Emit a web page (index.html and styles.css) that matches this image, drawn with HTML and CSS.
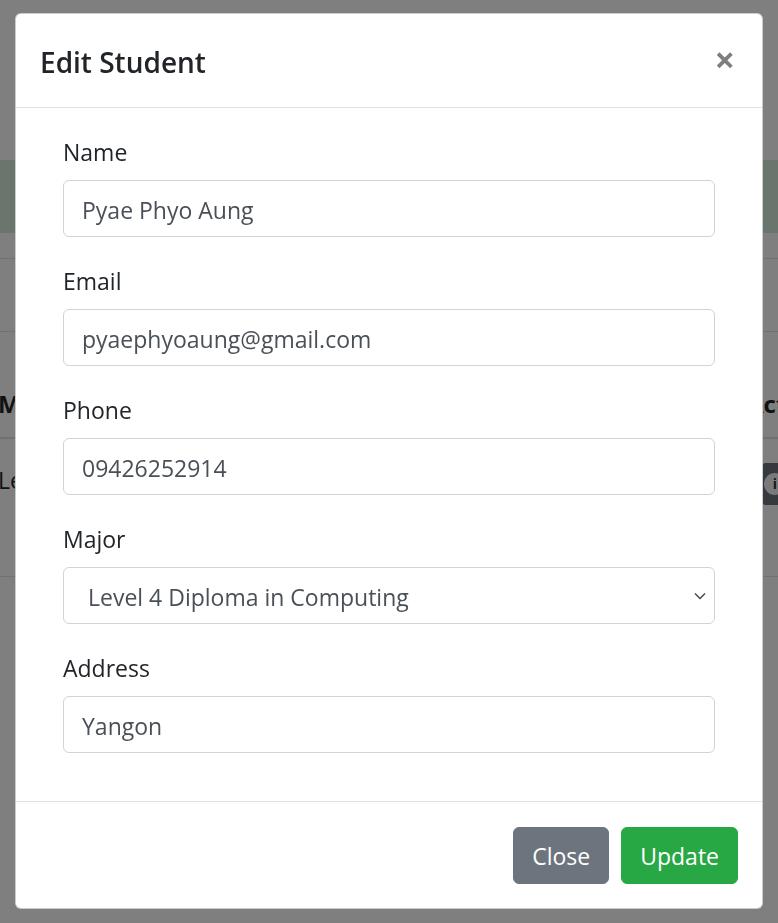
FILE: index.html
```html
<!DOCTYPE html>
<html lang="en">
<head>
<meta charset="utf-8">
<title>Edit Student</title>
<link rel="stylesheet" href="styles.css">
</head>
<body>
<div class="page">
  <div class="alert">Student updated successfully</div>
  <div class="toolbar">Students</div>
  <div class="table">
    <div class="row head">
      <div class="cell first">Major</div>
      <div class="spacer"></div>
      <div class="cell last">Action</div>
    </div>
    <div class="row body-row">
      <div class="cell first">Level 4</div>
      <div class="spacer"></div>
      <div class="cell last">
        <span class="info-btn"><span class="info-circle">i</span></span>
      </div>
    </div>
  </div>
</div>

<div class="backdrop"></div>

<div class="modal">
  <div class="modal-header">
    <h5 class="modal-title">Edit Student</h5>
    <button class="close" type="button">&times;</button>
  </div>
  <div class="modal-body">
    <form class="form">
      <div class="form-group">
        <label class="label">Name</label>
        <input class="input" type="text" value="Pyae Phyo Aung">
      </div>
      <div class="form-group">
        <label class="label">Email</label>
        <input class="input" type="text" value="pyaephyoaung@gmail.com">
      </div>
      <div class="form-group">
        <label class="label">Phone</label>
        <input class="input" type="text" value="09426252914">
      </div>
      <div class="form-group">
        <label class="label">Major</label>
        <div class="select-wrap">
          <select class="input select">
            <option>Level 4 Diploma in Computing</option>
          </select>
          <svg class="chevron" width="12" height="8" viewBox="0 0 12 8"><path d="M1 1.5 L6 6.5 L11 1.5" fill="none" stroke="#444" stroke-width="1.4"/></svg>
        </div>
      </div>
      <div class="form-group">
        <label class="label">Address</label>
        <input class="input" type="text" value="Yangon">
      </div>
    </form>
  </div>
  <div class="modal-footer">
    <button class="btn btn-secondary" type="button">Close</button>
    <button class="btn btn-success" type="button">Update</button>
  </div>
</div>
</body>
</html>
```

FILE: styles.css
```css
* { box-sizing: border-box; }

html, body {
  margin: 0;
  height: 100%;
}

body {
  font-family: "Open Sans", "Noto Sans", "DejaVu Sans", sans-serif;
  font-size: 23px;
  line-height: 36px;
  color: #212529;
  background: #fff;
  overflow: hidden;
}

/* background page */
.page {
  padding-top: 160px;
}

.alert {
  height: 73px;
  background: #d4edda;
  color: #155724;
  padding: 18px 30px;
  font-size: 0;
}

.toolbar {
  margin-top: 25px;
  height: 74px;
  border-top: 1px solid #dee2e6;
  border-bottom: 1px solid #dee2e6;
  font-size: 0;
}

.table {
  margin-top: 48px;
}

.row {
  display: flex;
  overflow: hidden;
}

.row.head {
  height: 59px;
  padding-top: 6px;
  border-bottom: 2px solid #dee2e6;
  font-weight: 700;
  font-size: 24px;
}

.row.body-row {
  height: 138px;
  padding-top: 23px;
  border-bottom: 1px solid #dee2e6;
}

.cell.first {
  margin-left: -2px;
  white-space: nowrap;
}

.spacer { flex: 1; }

.cell.last {
  width: 31px;
  flex: none;
  white-space: nowrap;
  overflow: hidden;
}

.info-btn {
  display: inline-flex;
  align-items: center;
  margin-left: 15px;
  height: 42px;
  width: 60px;
  background: #6c757d;
  border-radius: 4px;
  padding-left: 2px;
}

.info-circle {
  width: 22px;
  height: 22px;
  border-radius: 50%;
  background: #f5f5f5;
  color: #333;
  font-size: 14px;
  line-height: 22px;
  text-align: center;
  font-weight: 700;
}

.backdrop {
  position: fixed;
  inset: 0;
  background: rgba(0, 0, 0, 0.5);
}

/* modal */
.modal {
  position: fixed;
  top: 13px;
  left: 15px;
  width: 748px;
  background: #fff;
  border: 1px solid rgba(0, 0, 0, 0.2);
  border-radius: 6px;
  display: flex;
  flex-direction: column;
}

.modal-header {
  display: flex;
  align-items: flex-start;
  justify-content: space-between;
  padding: 24px;
  border-bottom: 1px solid #dee2e6;
}

.modal-title {
  margin: 0;
  font-size: 28px;
  line-height: 45px;
  height: 45px;
  font-weight: 600;
  color: #212529;
  padding-top: 2px;
}

.close {
  padding: 28px 27px 20px 21px;
  margin: -24px -24px -24px auto;
  background: transparent;
  border: 0;
  font-family: "Open Sans", "DejaVu Sans", sans-serif;
  font-size: 36px;
  font-weight: 700;
  line-height: 1;
  color: #000;
  opacity: 0.5;
  text-shadow: 0 1px 0 #fff;
}

.modal-body {
  padding: 24px;
}

.form {
  padding: 0 23px;
}

.form-group {
  margin-bottom: 24px;
}

.label {
  display: inline-block;
  margin-bottom: 12px;
  line-height: 36px;
  padding-top: 2px;
  height: 36px;
}

.input {
  display: block;
  width: 100%;
  height: 57px;
  padding: 10px 18px 8px;
  font-family: inherit;
  font-size: 23px;
  line-height: 36px;
  color: #495057;
  background: #fff;
  border: 1px solid #ced4da;
  border-radius: 6px;
}

.select-wrap {
  position: relative;
}

.select {
  appearance: none;
  -webkit-appearance: none;
  padding-left: 24px;
}

.chevron {
  position: absolute;
  right: 9px;
  top: 25px;
}

.modal-footer {
  display: flex;
  justify-content: flex-end;
  align-items: center;
  padding: 19px 18px 18px;
  border-top: 1px solid #dee2e6;
}

.btn {
  margin: 6px;
  height: 57px;
  padding: 10px 18px 9px;
  font-family: inherit;
  font-size: 23px;
  line-height: 36px;
  color: #fff;
  border: 1px solid transparent;
  border-radius: 6px;
}

.btn-secondary {
  background: #6c757d;
  border-color: #6c757d;
}

.btn-success {
  background: #28a745;
  border-color: #28a745;
}
```
